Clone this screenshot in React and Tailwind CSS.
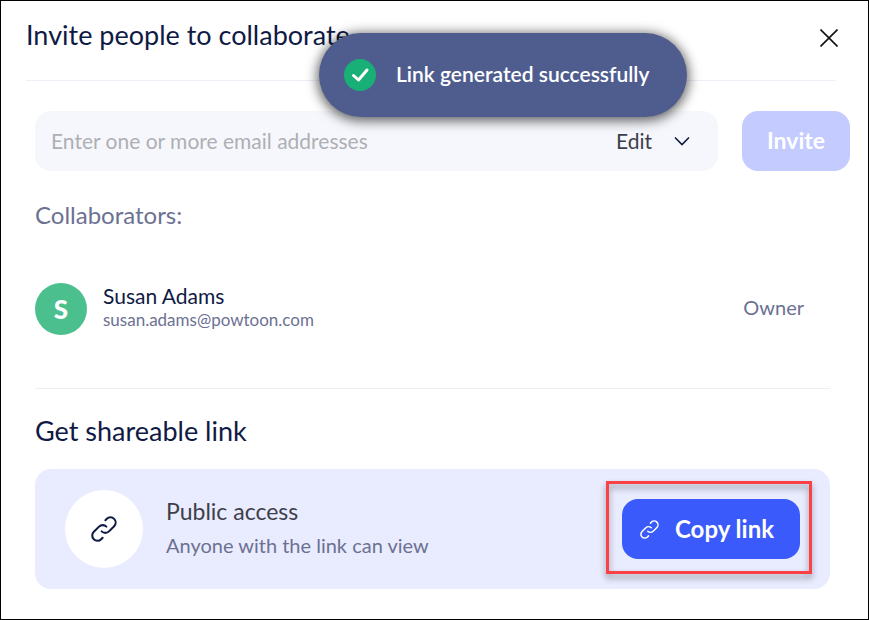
import React from "react";

function LinkIcon({ className }) {
  return (
    <svg
      viewBox="2 2 20 20"
      fill="none"
      stroke="currentColor"
      strokeWidth="1.6"
      strokeLinecap="round"
      strokeLinejoin="round"
      className={className}
      aria-hidden="true"
    >
      <path d="M13.828 10.172a4 4 0 0 0-5.656 0l-4 4a4 4 0 1 0 5.656 5.656l1.102-1.101" />
      <path d="M10.172 13.828a4 4 0 0 0 5.656 0l4-4a4 4 0 0 0-5.656-5.656l-1.1 1.1" />
    </svg>
  );
}

function Toast() {
  return (
    <div
      role="status"
      className="absolute left-[318px] top-8 flex h-[84px] w-[368px] items-center gap-5 rounded-full bg-[#4f5d8e] pl-[25px] text-[21px] font-semibold text-white shadow-[0_2px_12px_2px_rgba(0,0,0,0.6)]"
    >
      <svg viewBox="0 0 32 32" className="size-8 shrink-0" aria-hidden="true">
        <circle cx="16" cy="16" r="16" fill="#18b077" />
        <path
          d="M9.500 16.500l5 4.500 8.500-10"
          fill="none"
          stroke="#fff"
          strokeWidth="3"
          strokeLinecap="round"
          strokeLinejoin="round"
        />
      </svg>
      <span className="whitespace-nowrap pb-0.5">Link generated successfully</span>
    </div>
  );
}

function InviteForm() {
  return (
    <form className="flex gap-6 pl-[34px] pr-[18px] pt-[30px]" onSubmit={(e) => e.preventDefault()}>
      <div className="flex h-[60px] min-w-0 flex-1 items-center rounded-2xl bg-[#f6f7fc] pl-4 pr-6">
        <input
          type="email"
          multiple
          aria-label="Email addresses"
          placeholder="Enter one or more email addresses"
          className="h-full min-w-0 flex-1 bg-transparent pb-0.5 text-[21px] text-[#3c3f4d] outline-none placeholder:text-[#aeafb3]"
        />
        <div className="relative flex items-center">
          <select
            aria-label="Permission"
            className="w-[78px] appearance-none bg-transparent text-[21px] text-[#3c3f4a] outline-none"
          >
            <option>Edit</option>
            <option>View</option>
          </select>
          <svg
            viewBox="0 0 16 10"
            className="pointer-events-none absolute right-1 h-[10px] w-4"
            fill="none"
            stroke="#0f1a45"
            strokeWidth="1.6"
            aria-hidden="true"
          >
            <path d="M1 1.500l7 7 7-7" />
          </svg>
        </div>
      </div>
      <button
        type="submit"
        className="h-[60px] w-[108px] rounded-2xl bg-[#c4cbff] pb-0.5 text-[23px] font-bold text-white"
      >
        Invite
      </button>
    </form>
  );
}

function Collaborators() {
  return (
    <section className="pl-[34px] pr-[38px]">
      <h2 className="pt-7 text-2xl leading-8 text-[#6c7192]">Collaborators:</h2>
      <div className="flex items-center border-b border-[#eeeef2] pb-[53px] pr-[26px] pt-[52px]">
        <div className="flex size-[52px] items-center justify-center rounded-full bg-[#4bbf8e] text-[26px] font-black text-white">
          S
        </div>
        <div className="ml-4 flex-1 pb-0.5">
          <div className="text-[21px] leading-6 text-[#0f1a45]">Susan Adams</div>
          <div className="text-[17px] leading-6 text-[#6c7192]">susan.adams@powtoon.com</div>
        </div>
        <div className="pb-1 text-xl text-[#6c7192]">Owner</div>
      </div>
    </section>
  );
}

function ShareableLink() {
  return (
    <section className="pb-[30px] pl-[34px] pr-[38px] pt-6">
      <h2 className="text-[27px] leading-9 text-[#0f1a45]">Get shareable link</h2>
      <div className="mt-5 flex h-[120px] items-center rounded-2xl bg-[#e9ecfe] pl-[30px] pr-[30px]">
        <div className="flex size-[78px] items-center justify-center rounded-full bg-white text-[#0f1a45]">
          <LinkIcon className="size-[26px]" />
        </div>
        <div className="ml-[23px] flex-1 pb-0.5">
          <div className="text-[23px] leading-[34px] text-[#3c3f4a]">Public access</div>
          <div className="text-xl leading-[34px] text-[#6c7192]">Anyone with the link can view</div>
        </div>
        <div className="relative">
          <button
            type="button"
            className="flex h-[60px] w-[178px] items-center gap-4 rounded-2xl bg-[#3b5afb] pl-[18px] text-2xl font-bold text-white"
          >
            <LinkIcon className="size-[19px]" />
            <span>Copy link</span>
          </button>
          <div className="pointer-events-none absolute -bottom-[15px] -left-4 -right-3 -top-[18px] border-[3px] border-[#fb4146] drop-shadow-[0_4px_3px_rgba(0,0,0,0.4)]" />
        </div>
      </div>
    </section>
  );
}

export default function App() {
  return (
    <main className="relative border border-black bg-white font-['Lato','Liberation_Sans',sans-serif]">
      <header className="ml-[25px] mr-8 flex h-20 justify-between border-b border-[#eeeff7]">
        <h1 className="pt-4 text-[27px] leading-9 text-[#0f1a45]">Invite people to collaborate</h1>
        <button type="button" aria-label="Close" className="-mr-0.5 mt-7 h-[18px]">
          <svg viewBox="0 0 18 18" className="size-[18px]" stroke="#111" strokeWidth="1.6" aria-hidden="true">
            <path d="M0.500 0.500l17 17M17.500 0.500l-17 17" />
          </svg>
        </button>
      </header>
      <InviteForm />
      <Collaborators />
      <ShareableLink />
      <Toast />
    </main>
  );
}
